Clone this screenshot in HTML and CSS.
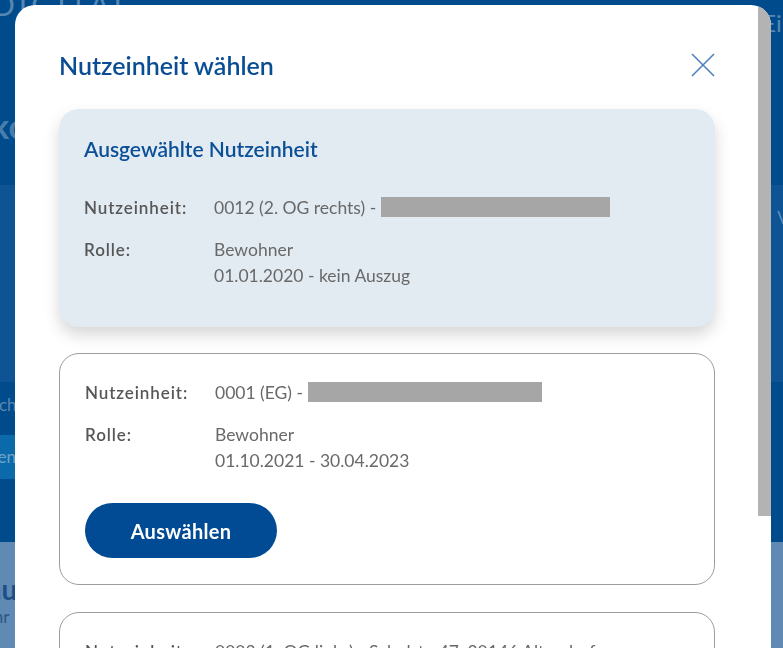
FILE: index.html
```html
<!DOCTYPE html>
<html lang="de">
<head>
    <meta charset="UTF-8">
    <meta name="viewport" content="width=device-width, initial-scale=1.0">
    <title>Nutzeinheit wählen</title>
    <link rel="stylesheet" href="styles.css">
</head>
<body>
<div class="page">
    <div class="band band-head">
        <span class="ghost ghost-logo">DIGITAL</span>
        <span class="ghost ghost-right">Einstellungen ändern</span>
        <span class="ghost ghost-hello">Willkommen im Kundenportal</span>
    </div>
    <div class="band band-nav">
        <span class="ghost ghost-nav">Verbrauchsinformationen ansehen</span>
    </div>
    <div class="band band-main">
        <span class="ghost ghost-sub">Verbrauch</span>
        <span class="page-button">Anmelden</span>
    </div>
    <div class="band band-foot">
        <span class="ghost-dark">Jährliche Abrechnung</span>
        <span class="ghost-small">kWh pro Jahr</span>
    </div>
</div>

<div class="modal">
    <div class="modal-body">
        <div class="modal-header">
            <h2>Nutzeinheit wählen</h2>
            <button class="close" type="button" aria-label="Schließen">
                <svg width="24" height="24" viewBox="0 0 24 24">
                    <path d="M1 1 L23 23 M23 1 L1 23" stroke="#4f81bd" stroke-width="1.6" fill="none"/>
                </svg>
            </button>
        </div>

        <div class="card card-selected">
            <h3>Ausgewählte Nutzeinheit</h3>
            <div class="details">
                <div class="row">
                    <span class="label">Nutzeinheit:</span>
                    <span class="value">0012 (2. OG rechts) - <span class="redacted redacted-long"></span></span>
                </div>
                <div class="row">
                    <span class="label">Rolle:</span>
                    <span class="value">Bewohner<br>01.01.2020 - kein Auszug</span>
                </div>
            </div>
        </div>

        <div class="card">
            <div class="details">
                <div class="row">
                    <span class="label">Nutzeinheit:</span>
                    <span class="value">0001 (EG) - <span class="redacted redacted-wide"></span></span>
                </div>
                <div class="row">
                    <span class="label">Rolle:</span>
                    <span class="value">Bewohner<br>01.10.2021 - 30.04.2023</span>
                </div>
            </div>
            <button class="select" type="button">Auswählen</button>
        </div>

        <div class="card">
            <div class="details">
                <div class="row">
                    <span class="label">Nutzeinheit:</span>
                    <span class="value">0003 (1. OG links) - Schulstr. 47, 20146 Altendorf</span>
                </div>
                <div class="row">
                    <span class="label">Rolle:</span>
                    <span class="value">Bewohner<br>01.05.2019 - 30.09.2021</span>
                </div>
            </div>
            <button class="select" type="button">Auswählen</button>
        </div>
    </div>
    <div class="scrollbar"><div class="thumb"></div></div>
</div>
</body>
</html>
```

FILE: styles.css
```css
body {
    font-family: Lato, "Liberation Sans", sans-serif;
    margin: 0;
    padding: 0;
    height: 648px;
    overflow: hidden;
    background-color: #004b8c;
}

/* page behind the dialog */
.page {
    display: flex;
    flex-direction: column;
}
.band {
    display: flex;
    flex-direction: column;
    overflow: hidden;
    color: rgba(255,255,255,0.35);
}
.band-head {
    height: 185px;
    background-color: #004b8c;
}
.band-nav {
    height: 197px;
    background-color: #0e5393;
}
.band-main {
    height: 160px;
    background-color: #004b8c;
}
.band-foot {
    height: 200px;
    background-color: #6089b4;
}
.ghost {
    white-space: nowrap;
}
.ghost-logo {
    font-size: 30px;
    letter-spacing: 4px;
    margin-top: -14px;
    margin-left: -8px;
}
.ghost-right {
    align-self: flex-end;
    font-size: 24px;
    margin-top: -14px;
    margin-right: -200px;
}
.ghost-hello {
    font-size: 34px;
    font-weight: 700;
    margin-top: 68px;
    margin-left: -70px;
    color: rgba(255,255,255,0.3);
}
.ghost-nav {
    align-self: flex-end;
    font-size: 17px;
    margin-top: 22px;
    margin-right: -250px;
}
.ghost-sub {
    font-size: 17px;
    margin-top: 12px;
    margin-left: -60px;
}
.page-button {
    width: 80px;
    height: 44px;
    margin-top: 20px;
    margin-left: -64px;
    background-color: #0b6aa9;
    color: rgba(255,255,255,0.4);
    font-size: 17px;
    line-height: 44px;
    text-align: right;
}
.ghost-dark {
    font-size: 28px;
    font-weight: 700;
    color: #1c4f86;
    margin-top: 30px;
    margin-left: -220px;
    white-space: nowrap;
}
.ghost-small {
    font-size: 17px;
    color: #2e5785;
    margin-left: -90px;
    white-space: nowrap;
}

/* dialog */
.modal {
    position: fixed;
    top: 5px;
    left: 15px;
    width: 756px;
    height: 760px;
    display: flex;
    background: #fff;
    border-radius: 20px;
    overflow: hidden;
}
.modal-body {
    flex: 1;
    padding: 45px 43px 0 44px;
}
.modal-header {
    display: flex;
    justify-content: space-between;
    align-items: center;
    margin-bottom: 29px;
}
.modal-header h2 {
    margin: 0;
    font-size: 25px;
    line-height: 30px;
    font-weight: 600;
    color: #0a4d93;
}
.close {
    display: flex;
    padding: 0;
    border: none;
    background: none;
    cursor: pointer;
}
.scrollbar {
    width: 13px;
}
.thumb {
    height: 511px;
    background-color: #b3b3b3;
}

/* cards */
.card {
    border: 1px solid #9c9c9c;
    border-radius: 20px;
    padding: 26px 25px 26px 25px;
    margin-bottom: 27px;
}
.card-selected {
    border: none;
    background-color: #e2eaf2;
    padding: 28px 25px 38px 25px;
    margin-bottom: 26px;
    box-shadow: 0 8px 16px rgba(0,0,0,0.16);
}
.card-selected h3 {
    margin: 0 0 34px 0;
    font-size: 21px;
    line-height: 24px;
    font-weight: 600;
    color: #0b4f96;
}
.details {
    display: flex;
    flex-direction: column;
    gap: 16px;
}
.row {
    display: flex;
    font-size: 17.5px;
    line-height: 26px;
}
.label {
    width: 130px;
    flex-shrink: 0;
    font-size: 17px;
    font-weight: 600;
    letter-spacing: 0.9px;
    color: #575757;
}
.value {
    color: #696969;
    white-space: nowrap;
}
.redacted {
    display: inline-block;
    height: 20px;
    vertical-align: -3px;
    background-color: #a6a6a6;
}
.redacted-long {
    width: 229px;
}
.redacted-wide {
    width: 234px;
}
.select {
    margin-top: 29px;
    width: 192px;
    height: 55px;
    border: none;
    border-radius: 28px;
    background-color: #004b93;
    color: #fff;
    font-family: Lato, "Liberation Sans", sans-serif;
    font-size: 20px;
    font-weight: 700;
    letter-spacing: 0.3px;
    cursor: pointer;
}
```
